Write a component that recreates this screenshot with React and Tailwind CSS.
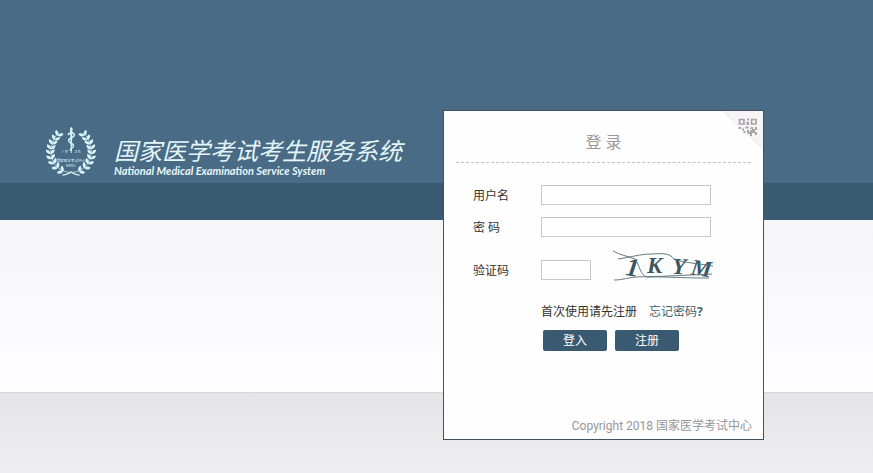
import React from "react";

const LEAVES = [
  [12, 10, -60],
  [9, 14.5, -68],
  [6.5, 19, -76],
  [5, 24, -84],
  [4.5, 29, -92],
  [5.5, 34.5, -102],
  [8, 39.5, -114],
  [12, 44, -130],
  [17.5, 47.5, -146],
];

function Branch() {
  return (
    <g>
      <path
        d="M12 8C4 17 2 32 11 42C15 46 20 48 27 48.500"
        fill="none"
        stroke="#d9f3f8"
        strokeWidth="0.7"
      />
      {LEAVES.map(([x, y, a]) => (
        <g key={y} transform={`translate(${x} ${y}) rotate(${a + 180}) scale(0.88)`}>
          <path d="M0 0C-0.500 -3.500 -4 -5 -6.500 -3.500C-5 -0.500 -3 1 0 0Z" transform="rotate(14)" />
          <path d="M0 0C-0.500 3.500 -3.500 5 -6 4C-5 0.500 -3 -1 0 0Z" transform="rotate(-10)" />
        </g>
      ))}
    </g>
  );
}

function Emblem() {
  return (
    <svg
      className="h-[52px] w-[50px] shrink-0"
      viewBox="0 0 52 54"
      fill="#d9f3f8"
      role="img"
      aria-label="国家医学考试中心"
    >
      <Branch />
      <g transform="translate(52 0) scale(-1 1)">
        <Branch />
      </g>
      <path d="M17 51C22 51 24 48 27 48M35 51C30 51 28 48 25 48" fill="none" stroke="#d9f3f8" strokeWidth="1.2" />
      <path d="M25 2.500a1.300 1.300 0 0 1 2.600 0L26.700 28h-0.900Z" />
      <path
        d="M23 9.500C24 6 30 6.500 29.500 9.500C29 12.500 23 12 23.500 15.500C24 18.500 29.500 17.500 28.500 21C28 23.500 24.500 22.500 25.500 26"
        fill="none"
        stroke="#d9f3f8"
        strokeWidth="1.5"
      />
      <g className="font-['Noto_Sans_CJK_SC',sans-serif]" textAnchor="middle">
        <text x="19.500" y="28" fontSize="3">人 民</text>
        <text x="33" y="28" fontSize="3">卫 生</text>
        <text x="26" y="37" fontSize="3.800">国家医学考试中心</text>
        <text x="26" y="42.500" fontSize="4">NMEC</text>
      </g>
    </svg>
  );
}

function Captcha() {
  return (
    <svg className="h-[42px] w-[104px]" viewBox="0 0 104 42" role="img" aria-label="验证码图片">
      <g
        className="font-['Liberation_Serif',serif]"
        fill="#3c5661"
        fontSize="23"
        fontWeight="700"
        fontStyle="italic"
      >
        <text x="14" y="27" fontSize="26" transform="rotate(8 20 20)">1</text>
        <text x="35" y="24">K</text>
        <text x="60" y="25" transform="rotate(3 66 18)">Y</text>
        <text x="79" y="27" transform="rotate(8 90 20)">M</text>
      </g>
      <g fill="none" stroke="#526a73" strokeWidth="0.9">
        <path d="M1 2C8 6 15 7 23 10C28 17 28 26 35 28C55 27 78 26 100 25" />
        <path d="M6 10C20 8 28 5 40 5C54 4 58 5 62 10C72 14 84 14 101 17" />
        <path d="M2 31C10 31 14 29 24 28C45 27 62 29 97 29" />
      </g>
    </svg>
  );
}

function QrCorner() {
  return (
    <svg className="absolute top-0 right-0 h-[38px] w-[40px]" viewBox="0 0 40 38" aria-hidden="true">
      <path d="M0 0H40V38Z" fill="#f6f4f7" />
      <path d="M0 0L40 38" stroke="#e6e4e7" />
      <g fill="none" stroke="#a8a4a8" strokeWidth="1.700">
        <path d="M16.500 8.500h4.500v4.500h-4.500zM28.500 8.500h4.500v4.500h-4.500z" />
      </g>
      <path
        d="M24 7.500h2v2h-2zM23.500 11h2.500v3h-2.500zM15.500 16h2.500v2h-2.500zM19 17.500h2v2h-2zM22.500 15.500h3v2h-3zM28 16h2v2h2v-2h2v3h-2v2h2v3h-2v-2h-3v3h-2v-2h-2v-2h2v-2h2v-1h-2zM20.500 20h2v2h-2zM24 19h2v3h-2z"
        fill="#a8a4a8"
      />
    </svg>
  );
}

function Field({ id, label, children }) {
  return (
    <div className="flex items-center">
      <label htmlFor={id} className="w-[68px] shrink-0 pt-0.5">
        {label}
      </label>
      {children}
    </div>
  );
}

const inputClass = "h-5 border border-[#c9c6cb] bg-white px-1 outline-none focus:border-[#3a5b74]";
const buttonClass = "h-[21px] w-16 rounded-[2px] bg-[#3a5a72] text-white hover:bg-[#4a6c86]";

function LoginCard() {
  return (
    <form
      className="relative flex w-[321px] shrink-0 flex-col border border-[#42525e] bg-[#fefefe] text-[#333]"
      onSubmit={(e) => e.preventDefault()}
    >
      <QrCorner />
      <h2 className="mr-3 ml-3 border-b border-dashed border-[#c3c0c3] pt-5 pb-[9px] text-center text-base leading-[22px] text-[#9c999c]">
        登 录
      </h2>
      <div className="flex flex-col gap-3 pt-[22px] pl-[29px]">
        <Field id="username" label="用户名">
          <input id="username" type="text" className={`w-[170px] ${inputClass}`} />
        </Field>
        <Field id="password" label="密 码">
          <input id="password" type="password" className={`w-[170px] ${inputClass}`} />
        </Field>
        <Field id="captcha" label="验证码">
          <input id="captcha" type="text" className={`mr-[21px] w-[50px] ${inputClass}`} />
          <Captcha />
        </Field>
      </div>
      <div className="flex gap-3 pt-3 pl-[97px] leading-[18px]">
        <span>首次使用请先注册</span>
        <a href="#forgot" className="text-[#3f626c]">
          忘记密码<b>?</b>
        </a>
      </div>
      <div className="flex gap-2 pt-[9px] pl-[99px]">
        <button type="submit" className={buttonClass}>登入</button>
        <button type="button" className={buttonClass}>注册</button>
      </div>
      <p className="pt-[66px] pr-[11px] pb-1 text-right font-['Roboto','Noto_Sans_CJK_SC',sans-serif] leading-[18px] text-[#99969a]">
        Copyright 2018 国家医学考试中心
      </p>
    </form>
  );
}

export default function App() {
  return (
    <main className="grid min-h-screen font-['Noto_Sans','Noto_Sans_CJK_SC',sans-serif] text-xs">
      <div className="col-start-1 row-start-1 flex flex-col" aria-hidden="true">
        <div className="h-[183px] bg-[#4a6b85]" />
        <div className="h-[37px] bg-[#3a5a72]" />
        <div className="h-[172px] bg-linear-to-b from-[#f5f4f7] to-[#fefdff]" />
        <div className="grow border-t border-[#d6d5d7] bg-linear-to-b from-[#e5e4e6] to-[#eeedf0]" />
      </div>
      <div className="col-start-1 row-start-1 mx-auto flex w-full max-w-[783px] items-start gap-10 pt-[110px] pb-8">
        <div className="flex w-[358px] shrink-0 items-start gap-[18px] pt-4 pl-px">
          <Emblem />
          <div className="pt-[11px] whitespace-nowrap italic">
            <h1 className="text-2xl leading-[28px] text-[#e4f6fa]">国家医学考试考生服务系统</h1>
            <p className="font-['Lato','Noto_Sans',sans-serif] text-[11px] leading-[12px] font-bold text-[#e4f6fa]">
              National Medical Examination Service System
            </p>
          </div>
        </div>
        <LoginCard />
      </div>
    </main>
  );
}
